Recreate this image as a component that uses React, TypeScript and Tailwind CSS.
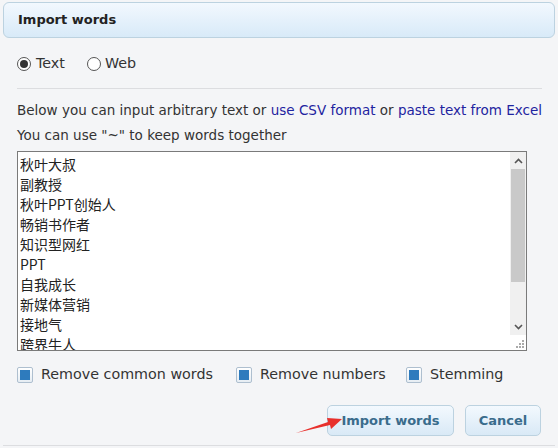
import React from "react";

const lines = ["秋叶大叔", "副教授", "秋叶PPT创始人", "畅销书作者", "知识型网红", "PPT", "自我成长", "新媒体营销", "接地气", "跨界牛人"];

function Check({ label, className = "" }: { label: string; className?: string }) {
  return (
    <div className={"flex items-center " + className}>
      <div className="w-[16px] h-[16px] rounded-[2px] border border-[#aebfcf] bg-gradient-to-b from-[#ffffff] to-[#e6edf3] flex items-center justify-center">
        <div className="w-[10px] h-[10px] bg-[#2e7bbd]" />
      </div>
      <span className="ml-[8px] text-[14.3px]">{label}</span>
    </div>
  );
}

export default function App() {
  return (
    <div
      className="relative w-[558px] h-[448px] bg-[#f4f5f7] overflow-hidden text-[#333] text-[13.5px]"
      style={{ fontFamily: '"DejaVu Sans", Verdana, sans-serif' }}
    >
      <div className="mx-[3px] pt-[2px]">
        <div className="h-[36px] rounded-[6px] border border-[#bcd2e0] bg-gradient-to-b from-[#f2f8fe] to-[#d8eaf8] flex items-center px-[14px]">
          <span className="font-bold text-[13px] text-[#222]">Import words</span>
        </div>
      </div>

      <div className="px-[17px]">
        <div className="mt-[16px] h-[20px] flex items-center text-[14.3px]">
          <div className="w-[14px] h-[14px] rounded-full border border-[#555] bg-white flex items-center justify-center">
            <div className="w-[8px] h-[8px] rounded-full bg-[#333]" />
          </div>
          <span className="ml-[5px]">Text</span>
          <div className="ml-[22px] w-[14px] h-[14px] rounded-full border border-[#555] bg-white" />
          <span className="ml-[4px]">Web</span>
        </div>

        <div className="mt-[14px] h-px bg-[#dcdde0] w-[525px]" />

        <div className="mt-[9px] leading-[25px] whitespace-nowrap">
          <div>
            Below you can input arbitrary text or <span className="text-[#1f24a0]">use CSV format</span> or{" "}
            <span className="text-[#1f24a0]">paste text from Excel</span>
          </div>
          <div>You can use "~" to keep words together</div>
        </div>

        <div className="mt-[3px] w-[510px] h-[200px] border border-[#7a7a7a] bg-white flex">
          <div
            className="flex-1 pl-[2px] pt-[2px] leading-[20px] text-[14px] text-[#222] overflow-hidden"
            style={{ fontFamily: '"Noto Sans CJK SC", "DejaVu Sans", sans-serif' }}
          >
            {lines.map((l) => (
              <div key={l}>{l}</div>
            ))}
          </div>
          <div className="w-[16px] flex flex-col bg-[#f0f0f0]">
            <div className="h-[17px] flex items-center justify-center">
              <svg width="9" height="6" viewBox="0 0 9 6">
                <path d="M1 5 L4.5 1.5 L8 5" stroke="#555" strokeWidth="1.6" fill="none" />
              </svg>
            </div>
            <div className="h-[113px] bg-[#c9c9c9] mx-[1px]" />
            <div className="flex-1" />
            <div className="h-[17px] flex items-center justify-center">
              <svg width="9" height="6" viewBox="0 0 9 6">
                <path d="M1 1 L4.5 4.5 L8 1" stroke="#555" strokeWidth="1.6" fill="none" />
              </svg>
            </div>
            <div className="h-[15px] bg-white flex items-end justify-end pr-[2px] pb-[2px]">
              <svg width="8" height="8" viewBox="0 0 8 8">
                <rect x="6" y="0" width="2" height="2" fill="#aaa" />
                <rect x="3" y="3" width="2" height="2" fill="#aaa" />
                <rect x="6" y="3" width="2" height="2" fill="#aaa" />
                <rect x="0" y="6" width="2" height="2" fill="#aaa" />
                <rect x="3" y="6" width="2" height="2" fill="#aaa" />
                <rect x="6" y="6" width="2" height="2" fill="#aaa" />
              </svg>
            </div>
          </div>
        </div>

        <div className="mt-[14px] h-[20px] flex items-center">
          <Check label="Remove common words" className="w-[219px]" />
          <Check label="Remove numbers" className="w-[170px]" />
          <Check label="Stemming" />
        </div>

        <div className="mt-[20px] flex justify-end pr-[0px] gap-[11px] w-[524px]">
          <button className="h-[31px] w-[127px] rounded-[5px] border border-[#bcd2e0] bg-gradient-to-b from-[#f3f9fe] to-[#d9e9f6] text-[#3a6c8c] font-bold text-[13px]">
            Import words
          </button>
          <button className="h-[31px] w-[76px] rounded-[5px] border border-[#bcd2e0] bg-gradient-to-b from-[#f3f9fe] to-[#d9e9f6] text-[#3a6c8c] font-bold text-[13px]">
            Cancel
          </button>
        </div>
      </div>

      <div className="absolute left-[3px] right-[3px] top-[445px] h-px bg-[#dcdde0]" />

      <svg className="absolute left-[294px] top-[410px]" width="50" height="26" viewBox="0 0 50 26">
        <path d="M2 23 L34 12 L33 8 L48 9 L37 19 L36 15 Z" fill="#e8302c" />
      </svg>
    </div>
  );
}
